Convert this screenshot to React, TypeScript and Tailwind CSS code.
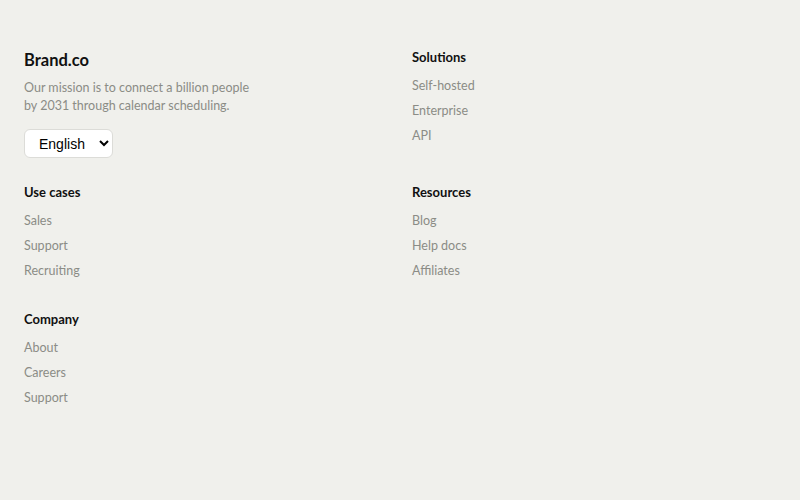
// Footer with a brand block, a language picker and link columns.
const COLUMNS: { title: string; links: string[] }[] = [
  { title: 'Use cases', links: ['Sales', 'Support', 'Recruiting'] },
  { title: 'Resources', links: ['Blog', 'Help docs', 'Affiliates'] },
  { title: 'Company', links: ['About', 'Careers', 'Support'] },
]

function LinkGroup({ title, links }: { title: string; links: string[] }) {
  return (
    <div>
      <h3 className="text-[13px] leading-[18px] font-bold text-[#111]">{title}</h3>
      <ul className="mt-[11px] flex flex-col gap-[7px]">
        {links.map((l) => (
          <li key={l} className="leading-[18px]">
            <a href="#" className="block text-[12.5px] leading-[18px] text-[#8b8c86] hover:text-[#111]">
              {l}
            </a>
          </li>
        ))}
      </ul>
    </div>
  )
}

export default function App() {
  return (
    <footer
      className="min-h-[500px] w-full bg-[#f0f0ec] px-6 pt-12"
      style={{ fontFamily: 'Lato, "Noto Sans", sans-serif' }}
    >
      <div className="grid grid-cols-2 gap-x-6">
        {/* Marque + langue */}
        <div>
          <div className="text-[16.5px] leading-6 font-bold text-[#111]">Brand.co</div>
          <p className="mt-[7px] text-[12.5px] leading-[18px] text-[#8b8c86]">
            Our mission is to connect a billion people
            <br />
            by 2031 through calendar scheduling.
          </p>
          <select
            defaultValue="en"
            className="mt-[14px] h-[29px] w-[89px] rounded-md border border-[#dcdcd8] bg-white pl-[10px] text-sm text-black"
            style={{ fontFamily: '"Liberation Sans", Arial, sans-serif' }}
          >
            <option value="en">English</option>
            <option value="fr">Français</option>
          </select>
        </div>
        <LinkGroup title="Solutions" links={['Self-hosted', 'Enterprise', 'API']} />

        <div className="mt-[25px]">
          <LinkGroup {...COLUMNS[0]} />
        </div>
        <div className="mt-[25px]">
          <LinkGroup {...COLUMNS[1]} />
        </div>

        <div className="mt-[30px]">
          <LinkGroup {...COLUMNS[2]} />
        </div>
      </div>
    </footer>
  )
}
